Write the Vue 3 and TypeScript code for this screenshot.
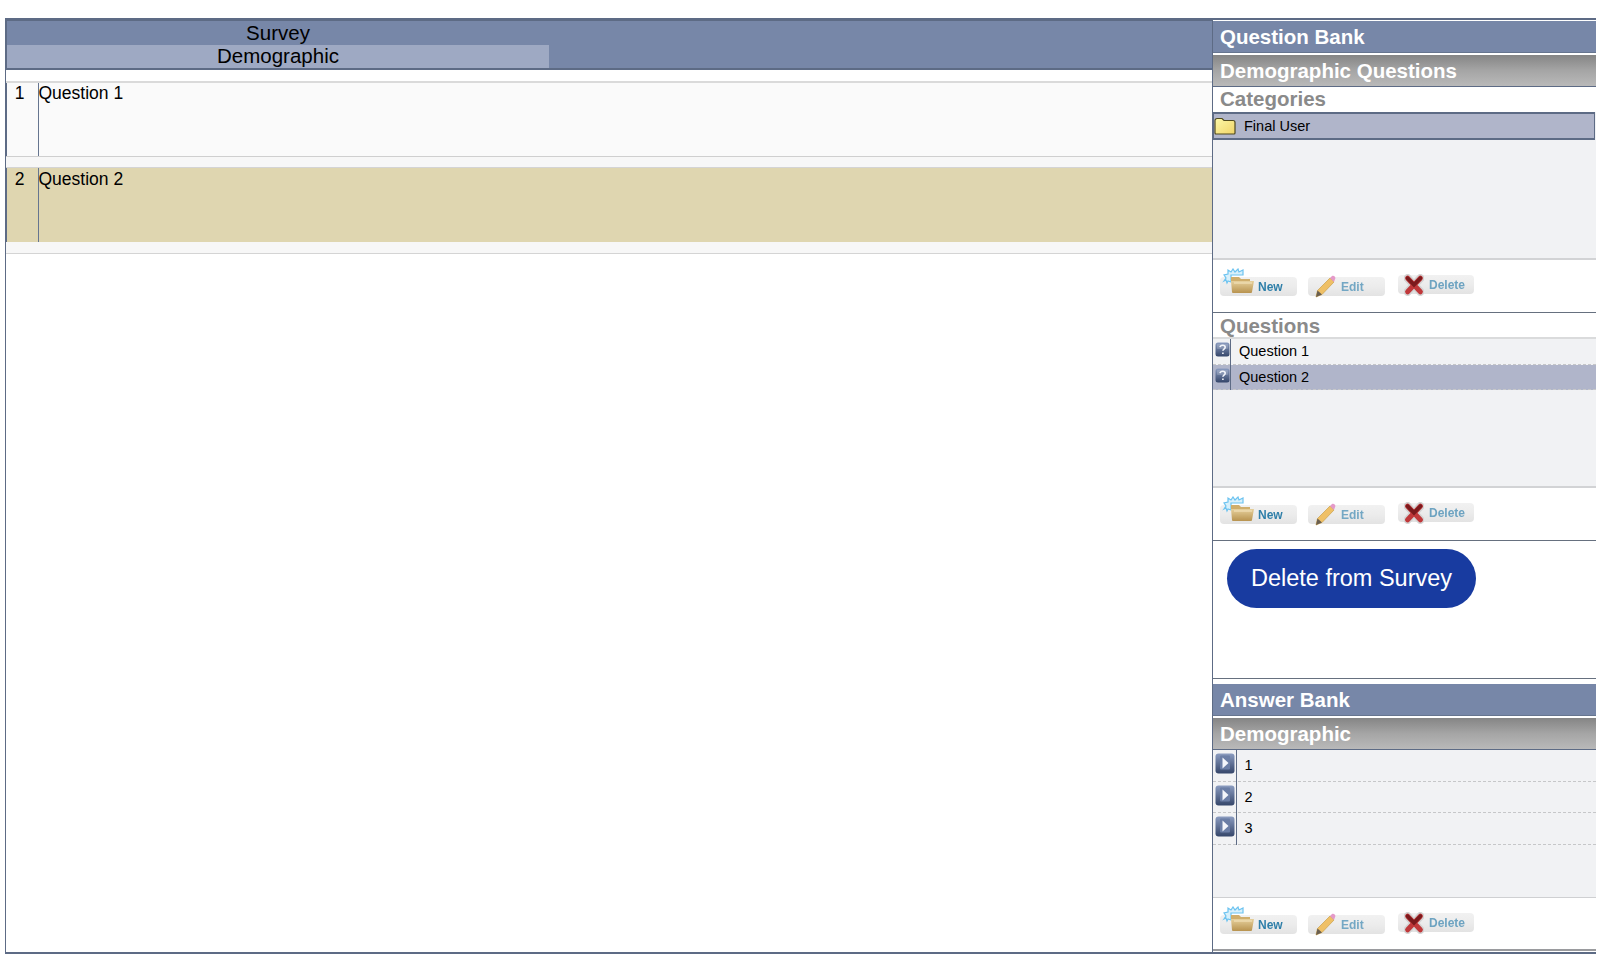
<script setup lang="ts">
interface Tool { label: string; icon: string; cls: string }
const tools: Tool[] = [
  { label: 'New', icon: '#ic-new', cls: 'new' },
  { label: 'Edit', icon: '#ic-edit', cls: 'edit' },
  { label: 'Delete', icon: '#ic-del', cls: 'del' },
]
const surveyRows = [
  { n: 1, text: 'Question 1', active: false },
  { n: 2, text: 'Question 2', active: true },
]
const bankRows = [
  { text: 'Question 1', active: false },
  { text: 'Question 2', active: true },
]
const answers = ['1', '2', '3']
</script>

<template>
  <div class="page">
    <svg class="defs" aria-hidden="true">
      <defs>
        <linearGradient id="g-folder" x1="0" y1="0" x2="0" y2="1">
          <stop offset="0" stop-color="#e6d09c" /><stop offset="1" stop-color="#b8934f" />
        </linearGradient>
        <linearGradient id="g-yellow" x1="0" y1="0" x2="1" y2="1">
          <stop offset="0" stop-color="#fbf8a8" /><stop offset="1" stop-color="#f0d468" />
        </linearGradient>
        <linearGradient id="g-btn" x1="0" y1="0" x2="0" y2="1">
          <stop offset="0" stop-color="#8b9cc0" /><stop offset="1" stop-color="#35466a" />
        </linearGradient>
      </defs>
      <symbol id="ic-new" viewBox="0 0 34 26">
        <path d="M2 13l2-3-2-3 4-1V2l3 2 2-3 2 3 3-3 1 3 4-2v5H9v7l-3-1-1 2-1-3z" fill="#d8f0fb" stroke="#6cc3f0" stroke-width="1.200" />
        <path d="M9 9h8l2 2h9v3H9z" fill="#cfae6c" />
        <path d="M9 13h23l-2 11a1 1 0 0 1-1 1H11a1 1 0 0 1-1-1z" fill="url(#g-folder)" />
        <path d="M12 15h18" stroke="#f5e6c0" stroke-width="1" />
      </symbol>
      <symbol id="ic-edit" viewBox="0 0 24 24">
        <path d="M3 23l1.500-6.500L17 4l4 4L9 20.500z" fill="#efc066" stroke="#c9a04c" stroke-width=".7" />
        <path d="M17 4l2-2c1-.6 2-.3 2.700.5s1 1.800.3 2.700L21 8z" fill="#e59ac9" />
        <path d="M3 23l1.500-6.500 4.500 4z" fill="#6a5f50" />
      </symbol>
      <symbol id="ic-del" viewBox="0 0 22 24">
        <path d="M4 4.500l14 15M18 4.500L4 19.500" stroke="#d4d4d4" stroke-width="9" stroke-linecap="round" fill="none" />
        <path d="M4 4.500l14 15M18 4.500L4 19.500" stroke="#c0383a" stroke-width="5.500" stroke-linecap="round" fill="none" />
        <path d="M4 4.500l7 7.300 7-7.300" stroke="#7b1a1d" stroke-width="4" stroke-linecap="round" fill="none" />
      </symbol>
      <symbol id="ic-folder" viewBox="0 0 22 18">
        <path d="M1 3.500a2 2 0 0 1 2-2h5l2 2h9a2 2 0 0 1 2 2V16a1 1 0 0 1-1 1H2a1 1 0 0 1-1-1z" fill="url(#g-yellow)" stroke="#4f4a20" stroke-width="1.200" />
      </symbol>
      <symbol id="ic-q" viewBox="0 0 15 15">
        <rect x=".5" y=".5" width="14" height="14" rx="2.500" fill="url(#g-btn)" />
        <rect x="2" y="2" width="11" height="5" rx="1" fill="#ffffff" opacity=".18" />
        <path d="M5 5.200c.3-1.500 1.300-2 2.700-2 1.500 0 2.500.8 2.500 2 0 1.900-2.300 1.800-2.300 3.600M7.900 10.500v1.600" fill="none" stroke="#f2f4fa" stroke-width="1.600" />
      </symbol>
      <symbol id="ic-play" viewBox="0 0 20 21">
        <rect x=".5" y=".5" width="19" height="20" rx="3" fill="url(#g-btn)" />
        <rect x="5" y="2.500" width="10" height="14" rx="1" fill="#6b7ea6" />
        <path d="M7.500 4.500l6 5.500-6 5.500z" fill="#f4f6fb" />
      </symbol>
    </svg>

    <main class="survey">
      <header class="survey-head">
        <div class="head-title">Survey</div>
        <div class="head-tab">Demographic</div>
      </header>
      <div class="rows">
        <div v-for="r in surveyRows" :key="r.n" class="s-row" :class="{ active: r.active }">
          <div class="s-body">
            <div class="s-num">{{ r.n }}</div>
            <div class="s-text">{{ r.text }}</div>
          </div>
          <div class="s-gap"></div>
        </div>
      </div>
    </main>

    <aside class="side">
      <h2 class="bar bar-first">Question Bank</h2>
      <h3 class="grad">Demographic Questions</h3>
      <h4 class="sub">Categories</h4>
      <div class="panel cat-panel">
        <div class="cat-row">
          <svg class="folder"><use href="#ic-folder" /></svg>
          <span>Final User</span>
        </div>
      </div>
      <div class="toolbar tb-dark">
        <div v-for="t in tools" :key="t.label" class="tool" :class="t.cls">
          <svg class="tool-ic"><use :href="t.icon" /></svg>
          <span>{{ t.label }}</span>
        </div>
      </div>

      <h4 class="sub sub-q">Questions</h4>
      <div class="panel q-panel">
        <div v-for="q in bankRows" :key="q.text" class="q-row" :class="{ active: q.active }">
          <div class="q-ic"><svg><use href="#ic-q" /></svg></div>
          <div class="q-text">{{ q.text }}</div>
        </div>
      </div>
      <div class="toolbar tb-dark">
        <div v-for="t in tools" :key="t.label" class="tool" :class="t.cls">
          <svg class="tool-ic"><use :href="t.icon" /></svg>
          <span>{{ t.label }}</span>
        </div>
      </div>

      <div class="action">
        <button type="button" class="pill">Delete from Survey</button>
      </div>

      <h2 class="bar bar-answer">Answer Bank</h2>
      <h3 class="grad">Demographic</h3>
      <div class="panel a-panel">
        <div v-for="a in answers" :key="a" class="a-row">
          <div class="a-ic"><svg><use href="#ic-play" /></svg></div>
          <div class="a-text">{{ a }}</div>
        </div>
      </div>
      <div class="toolbar tb-a">
        <div v-for="t in tools" :key="t.label" class="tool" :class="t.cls">
          <svg class="tool-ic"><use :href="t.icon" /></svg>
          <span>{{ t.label }}</span>
        </div>
      </div>
    </aside>
  </div>
</template>

<style>
html, body { margin: 0; background: #fff; }
</style>

<style scoped>
.page {
  width: 1600px;
  height: 955px;
  box-sizing: border-box;
  padding: 18px 4px 1px 5px;
  display: flex;
  font-family: "Liberation Sans", Arial, sans-serif;
  color: #000;
  background: #fff;
  overflow: hidden;
}
.defs { position: absolute; width: 0; height: 0; }

.survey {
  width: 1207px;
  flex: none;
  box-sizing: border-box;
  border-left: 1px solid #5d6b85;
  border-bottom: 2px solid #5d6b85;
  display: flex;
  flex-direction: column;
}
.survey-head {
  height: 52px;
  box-sizing: border-box;
  background: #7787a8;
  border-top: 3px solid #5d6b85;
  border-bottom: 2px solid #5d6b85;
  margin-left: -1px;
  border-left: 2px solid #5d6b85;
}
.head-title, .head-tab {
  width: 542px;
  text-align: center;
  font-size: 20.500px;
}
.head-title { height: 24px; line-height: 23px; }
.head-tab { height: 23px; line-height: 22px; background: #9ea9c3; }
.rows { margin-top: 11px; border-top: 2px solid #dadada; }
.s-body {
  display: flex;
  height: 73px;
  margin-left: -1px;
  box-sizing: border-box;
  border-left: 2.500px solid #5d6b85;
  background: #fafafa;
  line-height: 21px;
}
.s-row.active .s-body { height: 74px; background: #dfd6b0; line-height: 23px; }
.s-gap {
  height: 10px;
  background: #f7f7f7;
  border-top: 1px solid #cfcfcf;
  border-bottom: 1px solid #d4d4d4;
}
.s-row.active .s-gap { height: 11px; border-top: none; }
.s-num {
  width: 31.500px;
  flex: none;
  box-sizing: border-box;
  padding-right: 5.500px;
  text-align: center;
  font-size: 17.500px;
  border-right: 1.500px solid #66758f;
}
.s-text { font-size: 17.500px; }

.side {
  flex: 1;
  min-width: 0;
  border-left: 1.500px solid #5d6b85;
  border-top: 2px solid #5d6b85;
  border-bottom: 2px solid #5d6b85;
  display: flex;
  flex-direction: column;
}
.bar, .grad, .sub { margin: 0; padding-left: 7px; font-weight: 700; font-size: 20.500px; flex: none; }
.bar {
  color: #fff;
  height: 31px;
  line-height: 31px;
  background: #7787a8;
  border-bottom: 1px solid #66758f;
}
.bar-first { margin-top: 1px; }
.grad {
  color: #fff;
  margin-top: 2px;
  height: 31px;
  line-height: 31px;
  background: linear-gradient(#858585, #a5a5a5 50%, #b9b9b9);
  border-bottom: 1px solid #5d6b85;
}
.sub {
  color: #8a8a8a;
  height: 25px;
  line-height: 23px;
  background: #fff;
}
.panel { background: #f1f2f4; box-sizing: border-box; flex: none; }
.cat-panel { height: 148px; border-bottom: 2px solid #d2d3d5; }
.cat-row {
  height: 28px;
  box-sizing: border-box;
  display: flex;
  align-items: center;
  background: #b0b5ca;
  border: 2px solid #5d6b85;
  border-width: 2px 1px 2px 1px;
  margin-right: 1px;
  font-size: 14.500px;
  padding-bottom: 1px;
}
.folder { width: 22px; height: 18px; margin-right: 8px; flex: none; filter: blur(.5px); }

.toolbar {
  background: #fff;
  display: flex;
  flex: none;
  box-sizing: border-box;
  height: 53px;
  padding: 17px 0 0 7px;
  gap: 11px;
  align-items: flex-start;
}
.tb-dark { border-bottom: 1.500px solid #66707f; }
.tb-a { border-bottom: 2px solid #9a9b9e; }
.tool {
  width: 77px;
  height: 19px;
  flex: none;
  position: relative;
  display: flex;
  align-items: center;
  box-sizing: border-box;
  border-radius: 4px;
  background: linear-gradient(#f1f1f1, #ececec 50%, #e3e3e3);
  font-size: 12px;
  font-weight: 700;
  filter: blur(.7px);
}
.tool.new { color: #2f7fa9; padding-left: 38px; }
.tool.edit { color: #73a7c4; padding-left: 33px; }
.tool.del { color: #6da3c1; padding-left: 31px; margin-left: 2px; margin-top: -2px; width: 76px; }
.tool-ic { position: absolute; overflow: visible; }
.new .tool-ic { left: 2px; top: -9px; width: 34px; height: 26px; }
.edit .tool-ic { left: 5px; top: -3px; width: 24px; height: 24px; }
.del .tool-ic { left: 6px; top: -1px; width: 20px; height: 22px; }

.sub-q { border-bottom: 2px solid #dadbdc; height: 24px; line-height: 25px; }
.q-panel { height: 149px; border-bottom: 2px solid #d2d3d5; }
.q-row {
  display: flex;
  height: 25.500px;
  box-sizing: border-box;
  border-bottom: 1px dashed #c6c7c9;
  font-size: 14.500px;
  line-height: 24px;
}
.q-ic { width: 17.500px; flex: none; box-sizing: border-box; border-right: 1.500px solid #5d6b85; margin-bottom: -1px; }
.q-ic svg { display: block; width: 15px; height: 15px; margin: 3px 0 0 1.500px; filter: blur(.6px); }
.q-row.active { background: #b0b5ca; }
.q-text { padding-left: 8.500px; }

.action { height: 138px; flex: none; box-sizing: border-box; padding: 8px 0 0 14px; background: #fff; border-bottom: 1.500px solid #66707f; }
.pill {
  width: 249px;
  height: 59px;
  border: none;
  border-radius: 30px;
  background: #183ba0;
  color: #fff;
  font-family: inherit;
  font-size: 23.500px;
  padding: 0;
  display: block;
}
.bar-answer { margin-top: 5px; }
.a-panel { height: 148px; border-bottom: 1.500px solid #cfd0d2; }
.a-row {
  display: flex;
  height: 31.500px;
  box-sizing: border-box;
  border-bottom: 1.500px dashed #c6c7c9;
  font-size: 14.500px;
}
.a-ic { width: 23.500px; flex: none; box-sizing: border-box; border-right: 1.500px solid #5d6b85; margin-bottom: -1.500px; }
.a-ic svg { display: block; width: 20px; height: 21px; margin: 3px 0 0 1.500px; filter: blur(.6px); }
.a-text { padding-left: 8px; line-height: 30px; }
</style>
